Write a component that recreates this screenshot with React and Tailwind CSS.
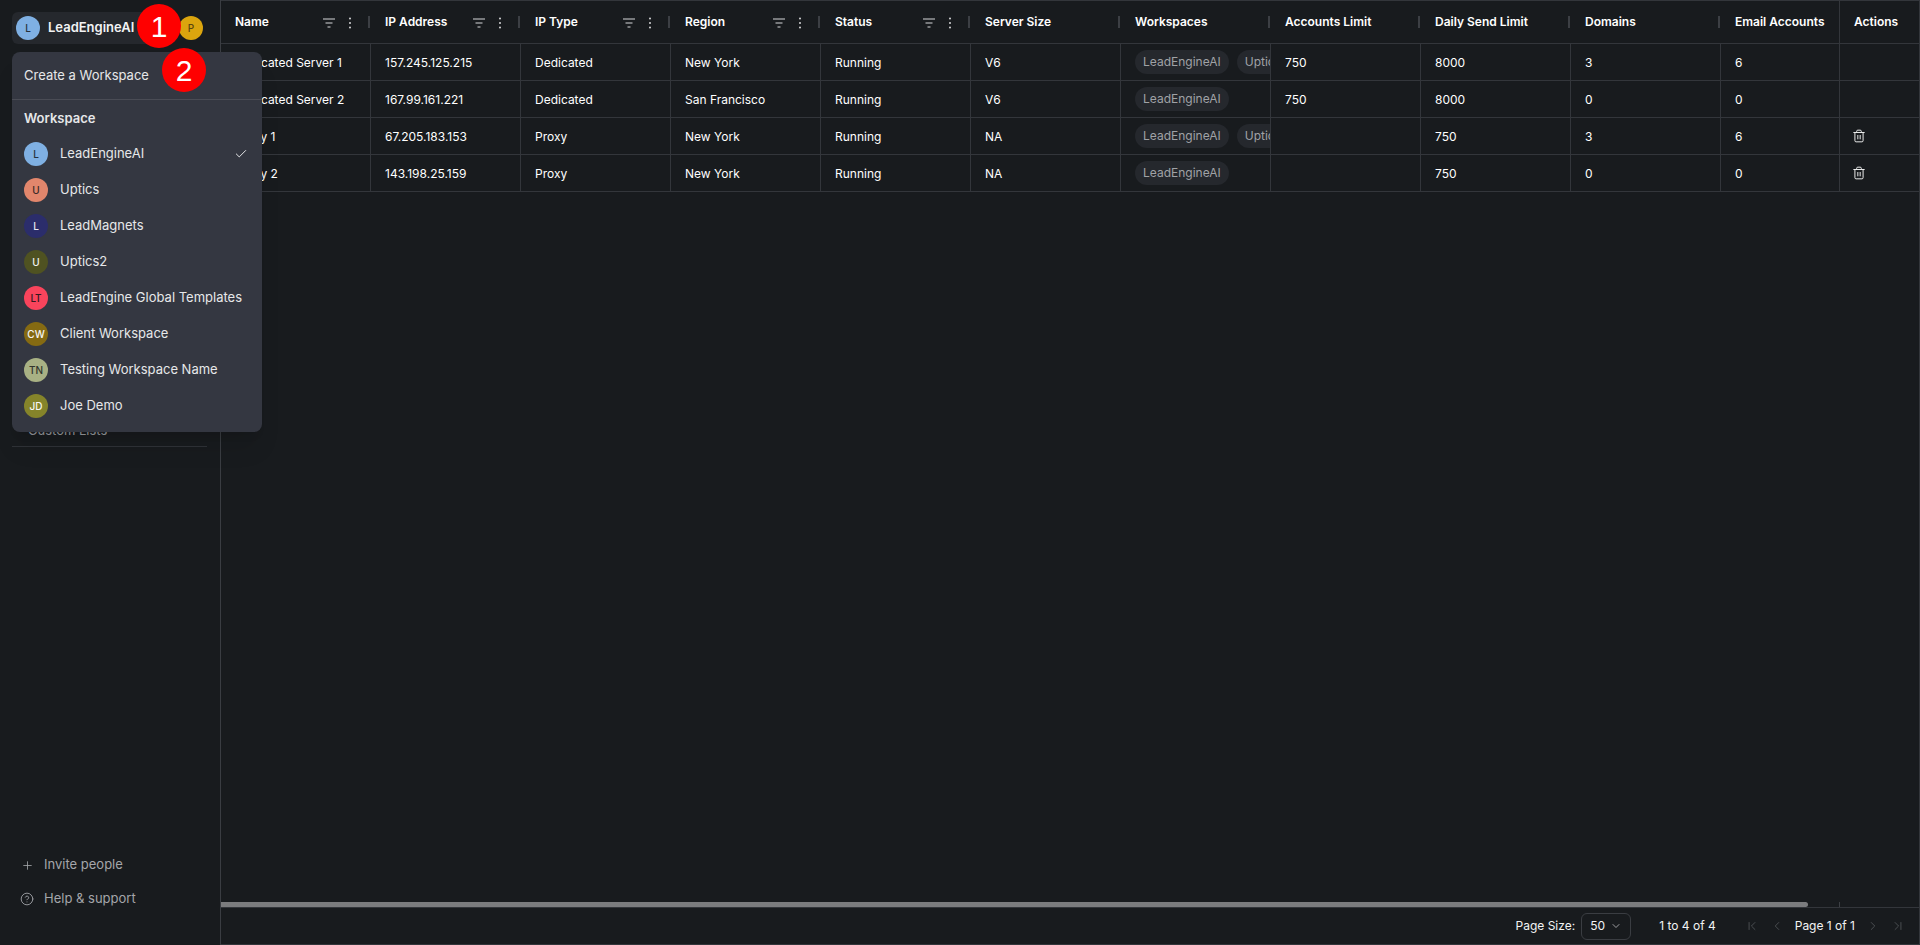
import React from "react";
import { Plus, CircleHelp, Check, Trash2, ChevronDown, ChevronFirst, ChevronLast, ChevronLeft, ChevronRight } from "lucide-react";

const font = { fontFamily: "Inter, 'Noto Sans', sans-serif" };

const headers = [
  { t: "Name", f: true }, { t: "IP Address", f: true }, { t: "IP Type", f: true }, { t: "Region", f: true }, { t: "Status", f: true },
  { t: "Server Size" }, { t: "Workspaces" }, { t: "Accounts Limit" }, { t: "Daily Send Limit" }, { t: "Domains" },
];

const rows = [
  ["Dedicated Server 1", "157.245.125.215", "Dedicated", "New York", "Running", "V6", 2, "750", "8000", "3", "6", false],
  ["Dedicated Server 2", "167.99.161.221", "Dedicated", "San Francisco", "Running", "V6", 1, "750", "8000", "0", "0", false],
  ["Proxy 1", "67.205.183.153", "Proxy", "New York", "Running", "NA", 2, "", "750", "3", "6", true],
  ["Proxy 2", "143.198.25.159", "Proxy", "New York", "Running", "NA", 1, "", "750", "0", "0", true],
];

const workspaces = [
  ["L", "LeadEngineAI", "bg-[#7fb0e3]", "text-[#26303c]"],
  ["U", "Uptics", "bg-[#e2866c]", "text-[#3a2a28]"],
  ["L", "LeadMagnets", "bg-[#2b2d6b]", "text-[#e8e8f0]"],
  ["U", "Uptics2", "bg-[#4f5221]", "text-[#f2f2f2]"],
  ["LT", "LeadEngine Global Templates", "bg-[#f9445c]", "text-[#33181f]"],
  ["CW", "Client Workspace", "bg-[#856a12]", "text-[#f6f6f6]"],
  ["TN", "Testing Workspace Name", "bg-[#a8b184]", "text-[#33362c]"],
  ["JD", "Joe Demo", "bg-[#85842a]", "text-[#f6f6f6]"],
];

function FilterIcon() {
  return (
    <svg width="12" height="10" viewBox="0 0 12 10" className="text-[#d6d7d9]">
      <path d="M0 1h12M2.5 5h7M4.5 9h3" stroke="currentColor" strokeWidth="1.2" fill="none" />
    </svg>
  );
}

function Kebab() {
  return (
    <svg width="4" height="12" viewBox="0 0 4 12" className="text-[#d6d7d9]">
      <circle cx="2" cy="1.5" r="1" fill="currentColor" />
      <circle cx="2" cy="6" r="1" fill="currentColor" />
      <circle cx="2" cy="10.5" r="1" fill="currentColor" />
    </svg>
  );
}

function Avatar({ label, bg, fg }) {
  return (
    <div className={`w-6 h-6 rounded-full flex items-center justify-center shrink-0 text-[10px] font-medium ${bg} ${fg}`}>{label}</div>
  );
}

function HeaderCell({ h }) {
  return (
    <div className="w-[150px] shrink-0 pl-[14px] flex items-center relative text-xs font-semibold text-white">
      <span>{h.t}</span>
      {h.f && (
        <>
          <span className="absolute left-[102px] top-[17px] flex"><FilterIcon /></span>
          <span className="absolute left-[127px] top-[16px] flex"><Kebab /></span>
        </>
      )}
      <span className="absolute left-[147px] top-[15px] w-[2px] h-3 bg-[#3c3f44]" />
    </div>
  );
}

function Chip({ t }) {
  return <span className="h-6 px-2 rounded-xl bg-[#25282d] text-[#a0a2a6] text-xs flex items-center shrink-0">{t}</span>;
}

function Cell({ children }) {
  return <div className="w-[150px] shrink-0 pl-[14px] pt-px flex items-center border-r border-[#33363b] text-xs text-white">{children}</div>;
}

export default function App() {
  return (
    <div className="relative flex h-[945px] w-[1920px] overflow-hidden bg-[#181b1e]" style={font}>
      <aside className="w-[221px] shrink-0 border-r border-[#3a3d42] flex flex-col px-3 pt-3 pb-[36px]">
        <div className="flex items-center justify-between pr-[5px]">
          <div className="w-[150px] h-8 rounded-md bg-[#25282d] flex items-center pl-1 gap-2">
            <Avatar label="L" bg="bg-[#7fb0e3]" fg="text-[#26303c]" />
            <span className="text-[13px] font-semibold text-[#f2f3f4]">LeadEngineAI</span>
          </div>
          <Avatar label="P" bg="bg-[#dba50e]" fg="text-[#5a4410]" />
        </div>
        <div className="mt-[376px] pl-[16px] text-[13px] text-[#9a9ca0] leading-5">Custom Lists</div>
        <div className="mt-[6px] mr-[1px] border-b border-[#2f3237]" />
        <div className="mt-auto flex flex-col gap-[14px] text-[13px] text-[#a4a6aa]">
          <div className="h-5 flex items-center gap-[10px] pl-[9px]"><Plus size={13} strokeWidth={1.5} /><span>Invite people</span></div>
          <div className="h-5 flex items-center gap-[10px] pl-[8px]"><CircleHelp size={14} strokeWidth={1.5} /><span>Help &amp; support</span></div>
        </div>
      </aside>

      <main className="flex-1 min-w-0 flex flex-col border-r border-b border-t border-[#33363b]">
        <div className="flex-1 min-h-0 flex flex-col relative overflow-hidden">
          <div className="flex h-[43px] border-b border-[#33363b] shrink-0">
            {headers.map((h) => <HeaderCell key={h.t} h={h} />)}
            <div className="flex-1 min-w-0 pl-[14px] flex items-center text-xs font-semibold text-white whitespace-nowrap">Email Accounts</div>
            <div className="w-[80px] shrink-0 pl-[14px] flex items-center border-l border-[#33363b] text-xs font-semibold text-white">Actions</div>
          </div>
          {rows.map((r) => (
            <div key={r[0]} className="flex h-[37px] border-b border-[#33363b] shrink-0">
              {r.slice(0, 6).map((c, i) => <Cell key={i}>{c}</Cell>)}
              <div className="w-[150px] shrink-0 pl-[14px] pr-0 flex items-center gap-2 border-r border-[#33363b] overflow-hidden">
                <Chip t="LeadEngineAI" />
                {r[6] > 1 && <Chip t="Uptics" />}
              </div>
              {r.slice(7, 10).map((c, i) => <Cell key={i}>{c}</Cell>)}
              <div className="flex-1 min-w-0 pl-[14px] pt-px flex items-center text-xs text-white">{r[10]}</div>
              <div className="w-[80px] shrink-0 pl-3 flex items-center border-l border-[#33363b] text-[#eceded]">
                {r[11] && <Trash2 size={14} strokeWidth={1.7} />}
              </div>
            </div>
          ))}
          <div className="mt-auto h-[5px] relative shrink-0">
            <div className="h-[5px] w-[1587px] rounded-r-sm bg-[#7b7c7e]" />
            <span className="absolute left-[1618px] top-0 h-[5px] w-px bg-[#3c3f44]" />
          </div>
        </div>
        <footer className="h-[37px] shrink-0 border-t border-[#33363b] flex items-center justify-end text-xs text-[#f2f3f4]">
          <span>Page Size:</span>
          <div className="ml-[6px] w-[50px] h-[27px] rounded-md border border-[#3a3d42] flex items-center pl-2 gap-[5px]">
            <span>50</span><ChevronDown size={12} strokeWidth={1.5} className="text-[#c5c6c9]" />
          </div>
          <span className="ml-[28px]">1 to 4 of 4</span>
          <ChevronFirst size={14} strokeWidth={1.4} className="ml-[29px] text-[#55585c]" />
          <ChevronLeft size={14} strokeWidth={1.4} className="ml-[11px] text-[#55585c]" />
          <span className="ml-[11px]">Page 1 of 1</span>
          <ChevronRight size={14} strokeWidth={1.4} className="ml-[11px] text-[#55585c]" />
          <ChevronLast size={14} strokeWidth={1.4} className="ml-[11px] mr-[14px] text-[#55585c]" />
        </footer>
      </main>

      <div className="absolute left-3 top-[52px] w-[250px] h-[380px] rounded-lg bg-[#343741] shadow-xl text-[13px] text-[#e6e7e9]">
        <div className="h-[48px] px-3 flex items-center border-b border-[#4a4c55]">Create a Workspace</div>
        <div className="h-[36px] pt-[2px] px-3 flex items-center font-semibold">Workspace</div>
        <div className="flex flex-col">
          {workspaces.map((w, i) => (
            <div key={w[1]} className="h-9 pl-3 pr-[14px] flex items-center gap-3">
              <Avatar label={w[0]} bg={w[2]} fg={w[3]} />
              <span className="flex-1">{w[1]}</span>
              {i === 0 && <Check size={14} strokeWidth={1.7} className="text-[#e6e7e9]" />}
            </div>
          ))}
        </div>
      </div>

      <div className="absolute left-[137px] top-[4px] w-[44px] h-[44px] rounded-full bg-[#ff0000] text-white flex items-center justify-center text-[30px]" style={{ fontFamily: "'Liberation Sans', sans-serif" }}>1</div>
      <div className="absolute left-[162px] top-[48px] w-[44px] h-[44px] rounded-full bg-[#ff0000] text-white flex items-center justify-center text-[30px]" style={{ fontFamily: "'Liberation Sans', sans-serif" }}>2</div>
    </div>
  );
}
